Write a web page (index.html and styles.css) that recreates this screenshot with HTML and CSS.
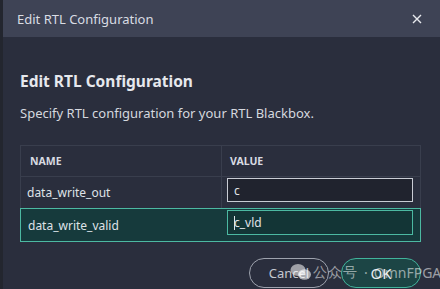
FILE: index.html
```html
<!DOCTYPE html>
<html lang="en">
<head>
    <meta charset="UTF-8">
    <title>Edit RTL Configuration</title>
    <link rel="stylesheet" href="styles.css">
</head>
<body>
    <div class="dialog">
        <div class="titlebar">
            <span>Edit RTL Configuration</span>
            <svg class="close" width="10" height="10" viewBox="0 0 10 10"><path d="M1 1L9 9M9 1L1 9" stroke="#e8eaee" stroke-width="1.4"/></svg>
        </div>
        <div class="content">
            <h1>Edit RTL Configuration</h1>
            <p class="desc">Specify RTL configuration for your RTL Blackbox.</p>
            <div class="table">
                <div class="row head">
                    <div class="cell name">NAME</div>
                    <div class="cell value">VALUE</div>
                </div>
                <div class="row">
                    <div class="cell name">data_write_out</div>
                    <div class="cell value"><div class="input">c</div></div>
                </div>
                <div class="row selected">
                    <div class="cell name">data_write_valid</div>
                    <div class="cell value"><div class="input"><span class="caret"></span>c_vld</div></div>
                </div>
            </div>
            <div class="buttons">
                <div class="btn cancel">Cancel</div>
                <div class="btn ok">OK</div>
            </div>
        </div>
        <div class="watermark">
            <svg width="22" height="18" viewBox="0 0 22 18"><ellipse cx="8" cy="7" rx="7.5" ry="6" fill="rgba(255,255,255,0.55)"/><ellipse cx="14.5" cy="11.5" rx="6.5" ry="5.2" fill="rgba(255,255,255,0.6)"/></svg>
            <span class="wm-cn">公众号</span><span class="wm-dot">·</span><span>OmnFPGA</span>
        </div>
    </div>
</body>
</html>
```
FILE: styles.css
```css
html,body{margin:0;padding:0;height:100%;}
body{
    background:#2a2e3d;
    font-family:"Noto Sans","Open Sans",sans-serif;
    color:#dfe2e8;
    overflow:hidden;
}
*{box-sizing:border-box;}
.dialog{position:relative;height:100%;border-left:3px solid #23262f;}
.titlebar{
    height:37px;
    background:#3e4355;
    display:flex;
    align-items:center;
    justify-content:space-between;
    padding:0 18px 0 14px;
    font-size:13px;
    color:#d9dce3;
}
.content{padding:0 19px 0 17px;}
h1{margin:33px 0 0;font-size:15.5px;font-weight:700;line-height:22px;color:#e6e8ed;}
.desc{margin:11px 0 0;font-size:13px;line-height:20px;color:#d5d8df;}
.table{margin-top:22px;border:1px solid #393e4d;}
.row{display:flex;height:31px;}
.row.head{height:31px;border-bottom:1px solid #393e4d;}
.cell{display:flex;align-items:center;}
.cell.name{width:201px;padding-left:6px;font-size:12px;border-right:1px solid #393e4d;}
.head .cell{font-size:10.5px;font-weight:700;color:#d8dbe2;}
.head .cell.name{padding-left:9px;}
.cell.value{flex:1;padding-left:5px;align-items:flex-start;padding-top:1px;}
.head .cell.value{padding:0 0 0 8px;align-items:center;}
.input{
    width:186px;
    height:24px;
    border:1px solid #c9ccd4;
    background:#20232e;
    font-size:12px;
    padding-left:6px;
    display:flex;
    align-items:center;
    color:#e0e3e8;
}
.row.selected{
    height:32px;
    background:#163a3c;
    outline:1px solid #4cb9a2;
    margin-top:1px;
}
.row.selected .cell.name{border-right:1px solid transparent;padding-left:7px;}
.row.selected .input{height:25px;border-color:#4cb9a2;background:#133536;}
.caret{display:inline-block;width:1px;height:14px;background:#e0e3e8;margin-right:-1px;}
.buttons{display:flex;justify-content:flex-end;gap:12px;margin-top:16px;}
.btn{
    width:80px;
    height:30px;
    border-radius:15px;
    display:flex;
    align-items:center;
    justify-content:center;
    font-size:13px;
}
.btn.cancel{border:1px solid #9ea3ae;color:#c4c8d0;}
.btn.ok{border:1px solid #41b39b;background:#1c4545;color:#e8eaee;font-size:15px;}
.watermark{
    position:absolute;
    left:287px;
    top:262px;
    display:flex;
    align-items:center;
    white-space:nowrap;
    font-size:14px;
    color:rgba(255,255,255,0.55);
}
.wm-cn{margin-left:1px;letter-spacing:1px;}
.wm-dot{margin:0 6px;}
```
